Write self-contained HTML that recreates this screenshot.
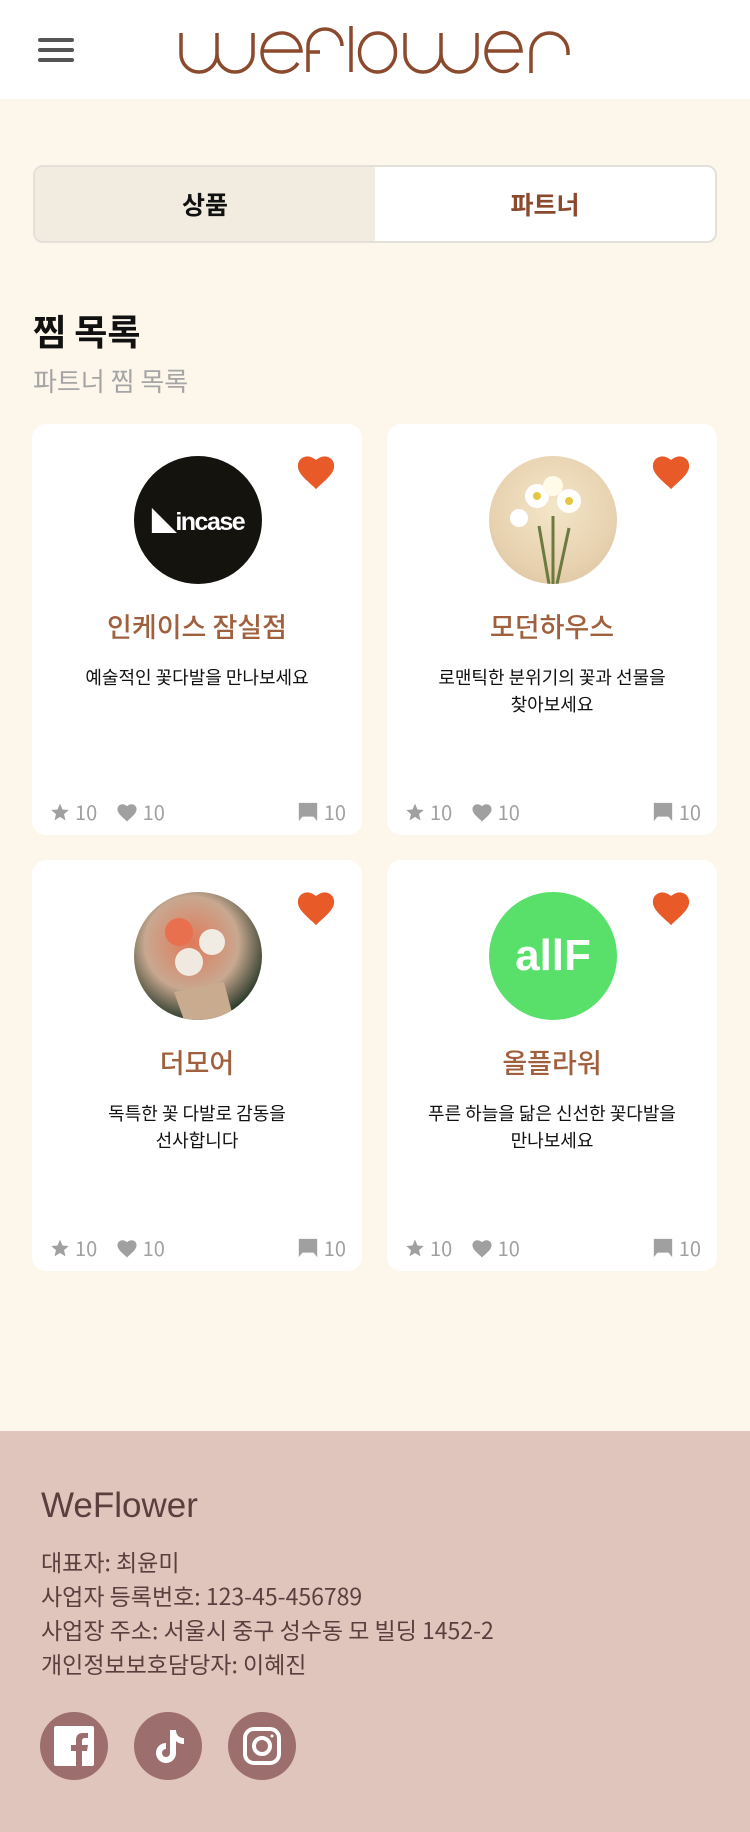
<!DOCTYPE html>
<html><head><meta charset="utf-8"><style>
*{margin:0;padding:0;box-sizing:border-box}
body{width:750px;height:1832px;background:#fdf6eb;font-family:"Liberation Sans","Noto Sans CJK KR",sans-serif;position:relative;overflow:hidden}
.k{font-family:"Noto Sans CJK KR",sans-serif}
.hdr{position:absolute;left:0;top:0;width:750px;height:99px;background:#fff}
.ham{position:absolute;left:38px;width:36px;height:4px;border-radius:2px;background:#555}
.tabs{position:absolute;left:33px;top:165px;width:684px;height:78px;border:2px solid #e3e0da;border-radius:10px;overflow:hidden;display:flex}
.tabs div{flex:1;display:flex;align-items:center;justify-content:center;font-size:25px;font-weight:bold}
.t1{background:#f1ebe0;color:#111}.t2{background:#fff;color:#8b4a2e}
.title{position:absolute;left:33px;top:304px;font-size:36px;font-weight:bold;color:#111}
.sub{position:absolute;left:33px;top:362px;font-size:26px;color:#a5a5a5}
.card{position:absolute;width:330px;height:411px;background:#fff;border-radius:14px}
.av{position:absolute;left:102px;top:32px;width:128px;height:128px;border-radius:50%;overflow:hidden;display:flex;align-items:center;justify-content:center}
.hrt{position:absolute;left:263px;top:28px}
.nm{position:absolute;left:0;width:100%;top:182px;text-align:center;font-size:27px;font-weight:500;color:#a0603e;font-family:"Noto Sans CJK KR",sans-serif}
.ds{position:absolute;left:10px;right:10px;top:240px;text-align:center;font-size:18px;line-height:27px;color:#111;font-family:"Noto Sans CJK KR",sans-serif}
.st{position:absolute;top:373px;font-size:20px;color:#a0a0a0;display:flex;align-items:center;gap:5px;font-family:"Noto Sans CJK KR",sans-serif}
.ft{position:absolute;left:0;top:1431px;width:750px;height:401px;background:#e0c5bc;color:#5a3f3f}
.ft h2{position:absolute;left:41px;top:55px;font-size:35px;font-weight:normal}
.ft p{position:absolute;left:41px;font-size:23px;font-family:"Noto Sans CJK KR",sans-serif;line-height:34px}
.so{position:absolute;top:281px;width:68px;height:68px;border-radius:50%;background:#9c6e6e;display:flex;align-items:center;justify-content:center}
</style></head><body>
<div class="hdr">
<div class="ham" style="top:38px"></div><div class="ham" style="top:48px"></div><div class="ham" style="top:58px"></div>
<svg style="position:absolute;left:0;top:0" width="750" height="99" fill="none" stroke="#8b4a2e" stroke-width="3.5">
<path d="M181 33V54A18 18 0 0 0 217 54V33M217 54A18 18 0 0 0 253 54V33"/>
<path d="M263 51H301A19.5 19.5 0 1 0 298 63"/>
<path d="M308 72V46A17 17 0 0 1 342 46M307 52H320"/>
<path d="M351 26V72"/>
<ellipse cx="377.5" cy="52.5" rx="18" ry="19.5"/>
<path d="M405 33V54A18 18 0 0 0 441 54V33M441 54A18 18 0 0 0 477 54V33"/>
<path d="M487 51H521A17.5 19.5 0 1 0 518 63"/>
<path d="M531 73V52A18.5 19 0 0 1 568 52V55"/>
</svg>
</div>
<div class="tabs k"><div class="t1">상품</div><div class="t2">파트너</div></div>
<div class="title k">찜 목록</div>
<div class="sub k">파트너 찜 목록</div>

<svg width="0" height="0" style="position:absolute"><defs>
<symbol id="star" viewBox="0 0 24 24"><path fill="#a0a0a0" d="M12 2l3 7 7.5.6-5.7 5 1.8 7.4L12 18l-6.6 4 1.8-7.4-5.7-5L9 9z"/></symbol>
<symbol id="hs" viewBox="0 0 24 22"><path fill="#a0a0a0" d="M12 21.5 10.5 20C5 15 1.5 11.9 1.5 8 1.5 4.9 3.9 2.5 7 2.5c1.7 0 3.4.8 5 2.1 1.6-1.3 3.3-2.1 5-2.1 3.1 0 5.5 2.4 5.5 5.5 0 3.9-3.5 7-9 12z"/></symbol>
<symbol id="cm" viewBox="0 0 24 24"><path fill="#a0a0a0" d="M2 2h20v15H6l-4 5z M18 17h4v5z"/></symbol>
<symbol id="hb" viewBox="0 0 24 22"><path fill="#e85a28" d="M12 21.5 10.5 20C5 15 1.5 11.9 1.5 8 1.5 4.9 3.9 2.5 7 2.5c1.7 0 3.4.8 5 2.1 1.6-1.3 3.3-2.1 5-2.1 3.1 0 5.5 2.4 5.5 5.5 0 3.9-3.5 7-9 12z"/></symbol>
</defs></svg>

<div class="card" style="left:32px;top:424px">
<div class="av" style="background:#15130d"><span style="color:#fff;font-weight:bold;font-size:25px;letter-spacing:-1.5px">◣incase</span></div>
<svg class="hrt" width="42" height="38"><use href="#hb"/></svg>
<div class="nm">인케이스 잠실점</div><div class="ds">예술적인 꽃다발을 만나보세요</div>
<div class="st" style="left:18px"><svg width="20" height="20"><use href="#star"/></svg>10&nbsp;&nbsp;&nbsp;<svg width="22" height="20"><use href="#hs"/></svg>10</div><div class="st" style="right:16px"><svg width="22" height="22"><use href="#cm"/></svg>10</div>
</div>
<div class="card" style="left:387px;top:424px">
<div class="av" style="background:radial-gradient(circle at 50% 40%,#f3e6c8,#e8d2b0 60%,#d9bf98)"><svg width="128" height="128"><path d="M64 128V60M60 128 50 70M68 128 80 72" stroke="#6a7a40" stroke-width="3"/><circle cx="48" cy="40" r="12" fill="#fff"/><circle cx="80" cy="45" r="12" fill="#fff"/><circle cx="64" cy="30" r="10" fill="#fffbe8"/><circle cx="30" cy="62" r="9" fill="#fff"/><circle cx="48" cy="40" r="4" fill="#e6c640"/><circle cx="80" cy="45" r="4" fill="#e6c640"/></svg></div>
<svg class="hrt" width="42" height="38"><use href="#hb"/></svg>
<div class="nm">모던하우스</div><div class="ds">로맨틱한 분위기의 꽃과 선물을<br>찾아보세요</div>
<div class="st" style="left:18px"><svg width="20" height="20"><use href="#star"/></svg>10&nbsp;&nbsp;&nbsp;<svg width="22" height="20"><use href="#hs"/></svg>10</div><div class="st" style="right:16px"><svg width="22" height="22"><use href="#cm"/></svg>10</div>
</div>
<div class="card" style="left:32px;top:860px">
<div class="av" style="background:radial-gradient(circle at 45% 40%,#e07a5a,#c8a890 45%,#2a3a2a 75%)"><svg width="128" height="128"><circle cx="45" cy="40" r="14" fill="#e8704e"/><circle cx="78" cy="50" r="13" fill="#f0ece4"/><circle cx="55" cy="70" r="14" fill="#efe9e0"/><path d="M40 100 90 90 100 128H50z" fill="#c9ab90"/></svg></div>
<svg class="hrt" width="42" height="38"><use href="#hb"/></svg>
<div class="nm">더모어</div><div class="ds">독특한 꽃 다발로 감동을<br>선사합니다</div>
<div class="st" style="left:18px"><svg width="20" height="20"><use href="#star"/></svg>10&nbsp;&nbsp;&nbsp;<svg width="22" height="20"><use href="#hs"/></svg>10</div><div class="st" style="right:16px"><svg width="22" height="22"><use href="#cm"/></svg>10</div>
</div>
<div class="card" style="left:387px;top:860px">
<div class="av" style="background:#58e06a"><span style="color:#fff;font-weight:bold;font-size:44px">allF</span></div>
<svg class="hrt" width="42" height="38"><use href="#hb"/></svg>
<div class="nm">올플라워</div><div class="ds">푸른 하늘을 닮은 신선한 꽃다발을<br>만나보세요</div>
<div class="st" style="left:18px"><svg width="20" height="20"><use href="#star"/></svg>10&nbsp;&nbsp;&nbsp;<svg width="22" height="20"><use href="#hs"/></svg>10</div><div class="st" style="right:16px"><svg width="22" height="22"><use href="#cm"/></svg>10</div>
</div>

<div class="ft">
<h2>WeFlower</h2>
<p style="top:113px">대표자: 최윤미</p>
<p style="top:147px">사업자 등록번호: 123-45-456789</p>
<p style="top:181px">사업장 주소: 서울시 중구 성수동 모 빌딩 1452-2</p>
<p style="top:215px">개인정보보호담당자: 이혜진</p>
<div class="so" style="left:40px"><svg width="40" height="40" viewBox="0 0 40 40"><rect x="0" y="0" width="40" height="40" rx="2" fill="#fff"/><path d="M28 40V25h5l1-6h-6v-4c0-2 1-3 3-3h3V7h-5c-5 0-7 3-7 7v5h-5v6h5v15z" fill="#9c6e6e"/></svg></div>
<div class="so" style="left:134px"><svg width="40" height="40" viewBox="0 0 40 40"><path d="M22 4h6c0 5 3 8 8 8v6c-3 0-6-1-8-3v12a10 10 0 1 1-10-10v6a4 4 0 1 0 4 4z" fill="#fff"/></svg></div>
<div class="so" style="left:228px"><svg width="40" height="40" viewBox="0 0 40 40" fill="none" stroke="#fff" stroke-width="4"><rect x="3" y="3" width="34" height="34" rx="9"/><circle cx="20" cy="20" r="8"/><circle cx="30" cy="10" r="1.5" fill="#fff" stroke="none"/></svg></div>
</div>
</body></html>
